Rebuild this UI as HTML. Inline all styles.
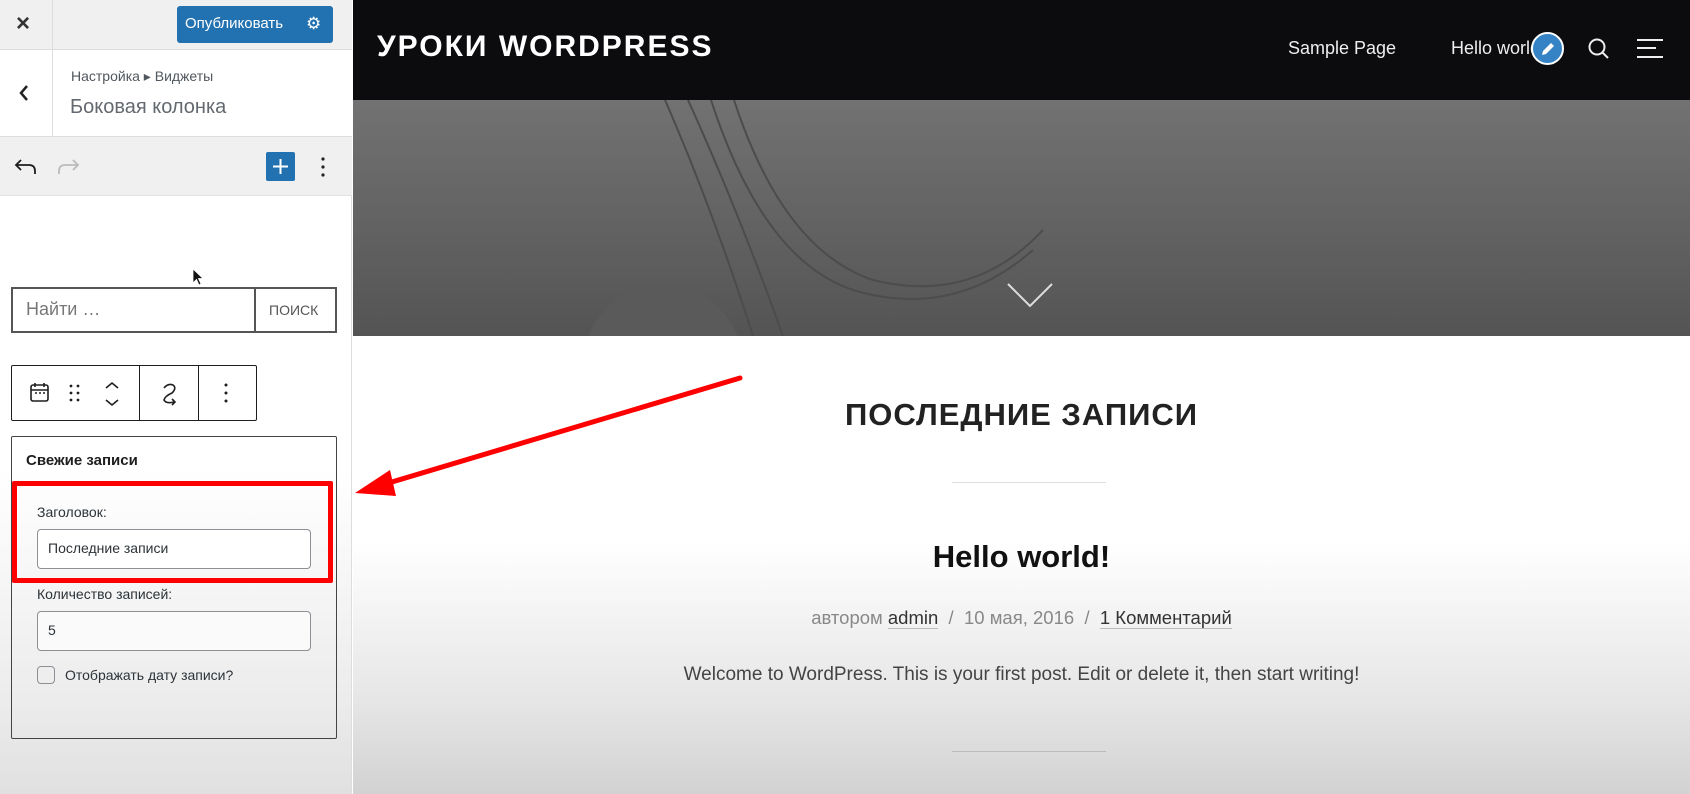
<!DOCTYPE html>
<html><head><meta charset="utf-8"><style>
*{margin:0;padding:0;box-sizing:border-box}
body{width:1690px;height:794px;overflow:hidden;position:relative;font-family:"Liberation Sans","Noto Sans CJK SC",sans-serif;background:#fff}
.a{position:absolute}
#side{left:0;top:0;width:352px;height:794px;background:linear-gradient(#fff 0,#fff 470px,#ececec 700px,#e0e0e0 794px);border-right:1px solid #ddd}
#content{left:353px;top:0;width:1337px;height:794px;background:linear-gradient(#fff 0,#fff 540px,#e6e6e6 700px,#d2d2d2 794px)}
.t{white-space:nowrap}
</style></head><body>
<div id="side" class="a">
 <div class="a" style="left:0;top:0;width:352px;height:50px;background:#f0f0f1;border-bottom:1px solid #ddd"></div>
 <div class="a" style="left:52px;top:0;width:1px;height:137px;background:#ddd"></div>
 <div class="a t" style="left:16px;top:10px;font-size:24px;color:#333;font-weight:bold">×</div>
 <div class="a" style="left:177px;top:6px;width:156px;height:37px;background:#2271b1;border-radius:3px"></div>
 <div class="a t" style="left:185px;top:15px;font-size:15px;color:#fff">Опубликовать</div>
 <div class="a t" style="left:306px;top:14px;font-size:17px;color:#fff">⚙</div>
 <div class="a" style="left:0;top:50px;width:352px;height:87px;background:#fff;border-bottom:1px solid #ddd"></div>
 <div class="a" style="left:52px;top:50px;width:1px;height:87px;background:#ddd"></div>
 <svg class="a" style="left:17px;top:83px" width="14" height="20"><path d="M10 3L4 10L10 17" fill="none" stroke="#222" stroke-width="2.5"/></svg>
 <div class="a t" style="left:71px;top:68px;font-size:14px;color:#50575e">Настройка ▸ Виджеты</div>
 <div class="a t" style="left:70px;top:96px;font-size:20px;color:#646970">Боковая колонка</div>
 <div class="a" style="left:0;top:137px;width:352px;height:59px;background:#f0f0f1;border-bottom:1px solid #e2e2e2"></div>
 <svg class="a" style="left:14px;top:156px" width="24" height="20"><path d="M7 4L2 9L7 14M2 9H15Q21 9 21 15V18" fill="none" stroke="#1e1e1e" stroke-width="1.8"/></svg>
 <svg class="a" style="left:56px;top:156px" width="24" height="20"><path d="M17 4L22 9L17 14M22 9H9Q3 9 3 15V18" fill="none" stroke="#bbb" stroke-width="1.8"/></svg>
 <div class="a" style="left:266px;top:152px;width:29px;height:29px;background:#2271b1;border-radius:2px"></div>
 <svg class="a" style="left:266px;top:152px" width="29" height="29"><path d="M14.5 7V22M7 14.5H22" stroke="#fff" stroke-width="2"/></svg>
 <svg class="a" style="left:318px;top:155px" width="10" height="24"><circle cx="5" cy="4" r="1.6" fill="#222"/><circle cx="5" cy="12" r="1.6" fill="#222"/><circle cx="5" cy="20" r="1.6" fill="#222"/></svg>
 <svg class="a" style="left:192px;top:268px" width="14" height="20"><path d="M1 1L1 15L4.5 11.5L7 17L9 16L6.5 10.5L11 10.5Z" fill="#111" stroke="#fff" stroke-width=".8"/></svg>
 <div class="a" style="left:11px;top:287px;width:326px;height:46px;border:2px solid #555;background:#fff"></div>
 <div class="a" style="left:254px;top:287px;width:2px;height:46px;background:#555"></div>
 <div class="a t" style="left:26px;top:299px;font-size:18px;color:#777">Найти …</div>
 <div class="a t" style="left:269px;top:302px;font-size:14px;color:#555">ПОИСК</div>
 <div class="a" style="left:11px;top:365px;width:246px;height:56px;border:1px solid #1e1e1e;border-radius:2px;background:#fff"></div>
 <div class="a" style="left:139px;top:365px;width:1px;height:56px;background:#1e1e1e"></div>
 <div class="a" style="left:198px;top:365px;width:1px;height:56px;background:#1e1e1e"></div>
 <svg class="a" style="left:28px;top:381px" width="24" height="24"><rect x="3" y="4" width="17" height="16" rx="2" fill="none" stroke="#1e1e1e" stroke-width="1.6"/><path d="M3 9H20M7 2V6M16 2V6" stroke="#1e1e1e" stroke-width="1.6"/><path d="M7 12H9M11 12H13M15 12H17" stroke="#1e1e1e" stroke-width="1.4"/></svg>
 <svg class="a" style="left:68px;top:383px" width="14" height="20"><g fill="#1e1e1e"><circle cx="3" cy="3" r="1.4"/><circle cx="10" cy="3" r="1.4"/><circle cx="3" cy="10" r="1.4"/><circle cx="10" cy="10" r="1.4"/><circle cx="3" cy="17" r="1.4"/><circle cx="10" cy="17" r="1.4"/></g></svg>
 <svg class="a" style="left:102px;top:380px" width="20" height="28"><path d="M4 8L10 3L16 8M4 20L10 25L16 20" fill="none" stroke="#1e1e1e" stroke-width="1.6"/></svg>
 <svg class="a" style="left:158px;top:380px" width="24" height="28"><path d="M6 8Q10 3 15 5Q19 8 14 13Q7 16 6 20Q8 24 16 22M14 19L17 22L14 25" fill="none" stroke="#1e1e1e" stroke-width="1.6"/></svg>
 <svg class="a" style="left:222px;top:381px" width="8" height="24"><circle cx="4" cy="4" r="1.5" fill="#1e1e1e"/><circle cx="4" cy="12" r="1.5" fill="#1e1e1e"/><circle cx="4" cy="20" r="1.5" fill="#1e1e1e"/></svg>
 <div class="a" style="left:11px;top:436px;width:326px;height:303px;border:1px solid #444;border-radius:2px"></div>
 <div class="a t" style="left:26px;top:452px;font-size:15px;font-weight:bold;color:#1e1e1e">Свежие записи</div>
 <div class="a t" style="left:37px;top:504px;font-size:14px;color:#2c3338">Заголовок:</div>
 <div class="a" style="left:37px;top:529px;width:274px;height:40px;border:1px solid #8c8f94;border-radius:4px;background:#fff"></div>
 <div class="a t" style="left:48px;top:540px;font-size:14px;color:#2c3338">Последние записи</div>
 <div class="a" style="left:12px;top:481px;width:321px;height:102px;border:5px solid #ff0000;border-radius:2px"></div>
 <div class="a t" style="left:37px;top:586px;font-size:14px;color:#2c3338">Количество записей:</div>
 <div class="a" style="left:37px;top:611px;width:274px;height:40px;border:1px solid #8c8f94;border-radius:4px;background:#fafafa"></div>
 <div class="a t" style="left:48px;top:622px;font-size:14px;color:#2c3338">5</div>
 <div class="a" style="left:37px;top:666px;width:18px;height:18px;border:1px solid #8c8f94;border-radius:4px"></div>
 <div class="a t" style="left:65px;top:667px;font-size:14px;color:#2c3338">Отображать дату записи?</div>
</div>
<div id="content" class="a">
 <div class="a" style="left:0;top:0;width:1337px;height:100px;background:#0c0b0e"></div>
 <div class="a t" style="left:24px;top:30px;font-size:30px;font-weight:bold;color:#fff;letter-spacing:2px">УРОКИ WORDPRESS</div>
 <div class="a t" style="left:935px;top:38px;font-size:18px;color:#eee">Sample Page</div>
 <div class="a t" style="left:1098px;top:38px;font-size:18px;color:#eee">Hello world!</div>
 <div class="a" style="left:1178px;top:32px;width:33px;height:33px;border-radius:50%;background:#3582c4;border:2px solid #fff"></div>
 <svg class="a" style="left:1186px;top:40px" width="18" height="18"><path d="M3 15L4 11L12 3L15 6L7 14Z" fill="#fff"/></svg>
 <svg class="a" style="left:1234px;top:37px" width="24" height="24"><circle cx="10" cy="10" r="7.5" fill="none" stroke="#eee" stroke-width="2"/><path d="M15.5 15.5L21 21" stroke="#eee" stroke-width="2"/></svg>
 <svg class="a" style="left:1283px;top:38px" width="28" height="22"><path d="M1 2H27M1 10H20M1 19H27" stroke="#eee" stroke-width="2"/></svg>
 <div class="a" style="left:0;top:100px;width:1337px;height:236px;background:linear-gradient(#727272,#545454);overflow:hidden">
  <svg width="1337" height="236"><g fill="none" stroke="#4c4c4c" stroke-width="2"><path d="M312 0Q360 110 400 236"/><path d="M335 0Q385 110 430 236"/><path d="M358 0Q410 160 500 190Q600 220 680 150"/><path d="M381 0Q430 150 520 180Q620 205 690 130"/></g><circle cx="310" cy="265" r="80" fill="#5a5a5a"/></svg>
 </div>
 <svg class="a" style="left:654px;top:282px" width="46" height="26"><path d="M1 2L23 24L45 2" fill="none" stroke="#ddd" stroke-width="2"/></svg>
 <div class="a t" style="left:0;width:1337px;text-align:center;top:397px;font-size:31px;font-weight:bold;color:#222;letter-spacing:1px">ПОСЛЕДНИЕ ЗАПИСИ</div>
 <div class="a" style="left:599px;top:482px;width:154px;height:1px;background:#ddd"></div>
 <div class="a t" style="left:0;width:1337px;text-align:center;top:539px;font-size:31px;font-weight:bold;color:#111">Hello world!</div>
 <div class="a t" style="left:0;width:1337px;text-align:center;top:607px;font-size:18.5px;color:#888">автором <span style="color:#333;border-bottom:1px solid #bbb">admin</span> &nbsp;/&nbsp; 10 мая, 2016 &nbsp;/&nbsp; <span style="color:#333;border-bottom:1px solid #bbb">1 Комментарий</span></div>
 <div class="a t" style="left:0;width:1337px;text-align:center;top:664px;font-size:19px;color:#444">Welcome to WordPress. This is your first post. Edit or delete it, then start writing!</div>
 <div class="a" style="left:599px;top:751px;width:154px;height:1px;background:#bbb"></div>
</div>
<svg class="a" style="left:0;top:0" width="1690" height="794"><path d="M740 378L375 487" stroke="#f00" stroke-width="5" stroke-linecap="round"/><path d="M355 493L390 470L396 496Z" fill="#f00"/></svg>
</body></html>
